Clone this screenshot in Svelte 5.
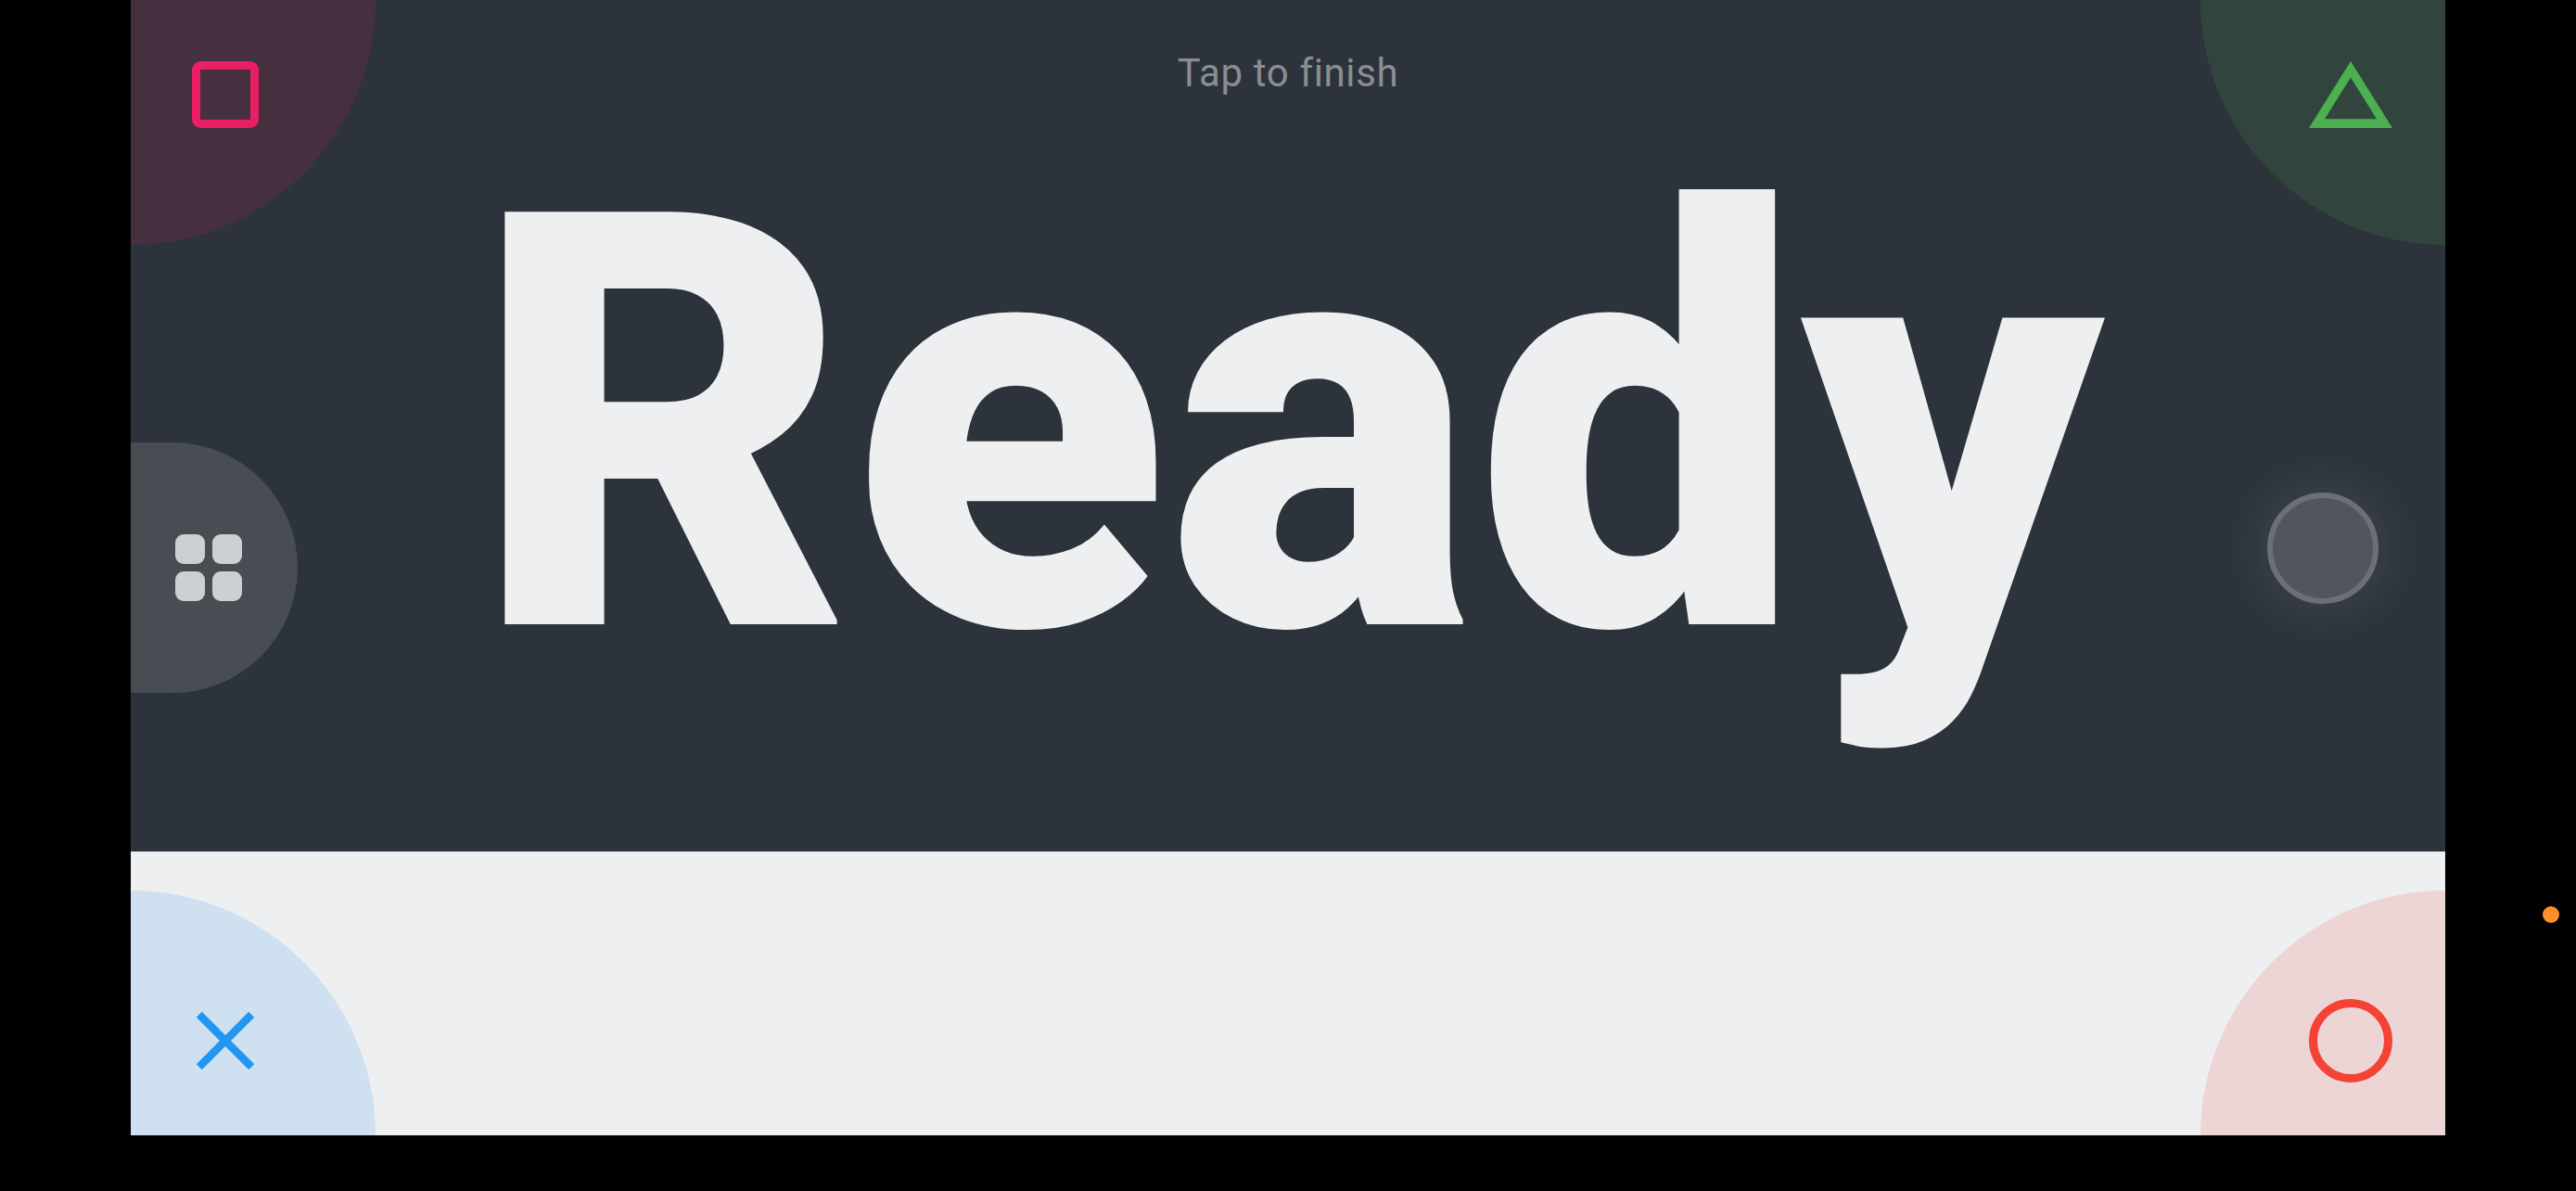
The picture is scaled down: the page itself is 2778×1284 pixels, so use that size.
<script>
  const cells = [0, 1, 2, 3];
</script>

<main class="page">
  <section class="screen">
    <div class="dark">
      <h1 class="word">Ready</h1>
      <p class="hint">Tap to finish</p>
    </div>
    <div class="light"></div>

    <div class="corner tl">
      <svg class="icon" width="72" height="72" viewBox="0 0 72 72">
        <rect x="4.5" y="4.5" width="63" height="63" rx="5" fill="none" stroke="#e91e63" stroke-width="9" />
      </svg>
    </div>
    <div class="corner tr">
      <svg class="icon" width="90" height="72" viewBox="0 0 90 72">
        <path fill="#4caf50" fill-rule="evenodd" d="M45 0 90 72H0ZM45 17.5 17 62.3H73Z" />
      </svg>
    </div>
    <div class="corner bl">
      <svg class="icon" width="62" height="62" viewBox="0 0 62 62">
        <path d="M2.8 2.8 59.2 59.2M59.2 2.8 2.8 59.2" fill="none" stroke="#2196f3" stroke-width="8.5" />
      </svg>
    </div>
    <div class="corner br">
      <svg class="icon" width="90" height="90" viewBox="0 0 90 90">
        <circle cx="45" cy="45" r="40.5" fill="none" stroke="#f44336" stroke-width="9" />
      </svg>
    </div>

    <div class="home">
      <div class="grid">
        {#each cells as c (c)}
          <span class="cell"></span>
        {/each}
      </div>
    </div>

    <div class="stick"></div>
  </section>
  <span class="dot"></span>
</main>

<style>
  :global(body) {
    margin: 0;
    background: #000;
  }
  .page {
    position: relative;
    width: 2778px;
    height: 1284px;
    padding-left: 141px;
    box-sizing: border-box;
    background: #000;
    overflow: hidden;
  }
  .screen {
    position: relative;
    width: 2496px;
    height: 1224px;
    display: flex;
    flex-direction: column;
    overflow: hidden;
  }
  .dark {
    position: relative;
    height: 918px;
    background: #2d333b;
    display: flex;
    align-items: center;
    justify-content: center;
  }
  .light {
    flex: 1;
    background: #eeeff1;
  }
  .hint {
    position: absolute;
    left: 0;
    right: 0;
    top: 54px;
    margin: 0;
    text-align: center;
    font: 400 42px/50px Roboto, sans-serif;
    letter-spacing: 0.63px;
    color: #8a8d92;
  }
  .word {
    margin: 0;
    font: 900 625.5px/normal Roboto, sans-serif;
    color: #eeeff1;
  }
  .corner {
    position: absolute;
    width: 264px;
    height: 264px;
  }
  .icon {
    position: absolute;
    display: block;
  }
  .tl {
    left: 0;
    top: 0;
    background: rgba(233, 30, 99, 0.135);
    border-bottom-right-radius: 264px;
  }
  .tl .icon {
    left: 66px;
    top: 66px;
  }
  .tr {
    right: 0;
    top: 0;
    background: rgba(76, 175, 80, 0.15);
    border-bottom-left-radius: 264px;
  }
  .tr .icon {
    right: 57px;
    top: 66px;
  }
  .bl {
    left: 0;
    bottom: 0;
    background: rgba(33, 150, 243, 0.15);
    border-top-right-radius: 264px;
  }
  .bl .icon {
    left: 71px;
    bottom: 71px;
  }
  .br {
    right: 0;
    bottom: 0;
    background: rgba(244, 67, 54, 0.15);
    border-top-left-radius: 264px;
  }
  .br .icon {
    right: 57px;
    bottom: 57px;
  }
  .home {
    position: absolute;
    left: 0;
    top: 477px;
    width: 180px;
    height: 270px;
    padding-left: 48px;
    box-sizing: border-box;
    display: flex;
    align-items: center;
    background: rgba(255, 255, 255, 0.13);
    border-radius: 0 135px 135px 0;
  }
  .grid {
    display: grid;
    grid-template-columns: 32px 32px;
    grid-auto-rows: 32px;
    gap: 8px;
  }
  .cell {
    background: #cdd0d3;
    border-radius: 9px;
  }
  .stick {
    position: absolute;
    left: 2304px;
    top: 531px;
    width: 120px;
    height: 120px;
    box-sizing: border-box;
    border: 6px solid #6c7076;
    border-radius: 50%;
    background: #52565c;
    box-shadow: 0 0 60px rgba(255, 255, 255, 0.12);
  }
  .dot {
    position: absolute;
    left: 2742px;
    top: 977px;
    width: 18px;
    height: 18px;
    border-radius: 50%;
    background: #ff9029;
  }
</style>
